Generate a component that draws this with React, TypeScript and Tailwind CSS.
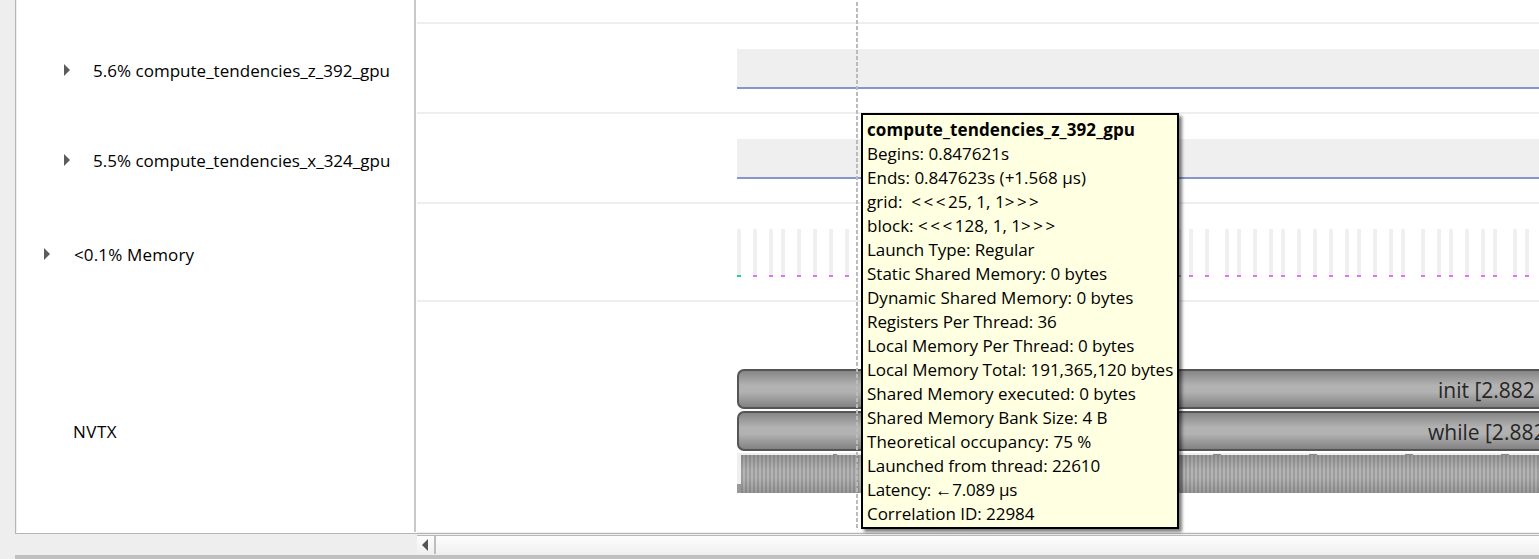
import type { ReactNode } from "react";

const ticksLeft = [737, 753, 769, 781, 797, 813, 829, 845];
const ticksRight = [1177, 1189, 1205, 1225, 1237, 1253, 1269, 1281, 1297, 1313, 1329, 1345, 1357, 1373, 1389, 1401, 1421, 1437, 1449, 1465, 1481, 1493, 1513, 1525];
const ticks = [...ticksLeft, ...ticksRight];
const notches = [833, 1213, 1309, 1405, 1501];

function Brackets({ children }: { children: string }) {
  return <span className="tracking-[2.5px]">{children}</span>;
}

const tooltipLines: { key: string; cls: string; body: ReactNode }[] = [
  { key: "begins", cls: "tracking-[0px]", body: "Begins: 0.847621s" },
  { key: "ends", cls: "tracking-[0.02px]", body: "Ends: 0.847623s (+1.568 µs)" },
  { key: "grid", cls: "tracking-[0.02px]", body: <>grid:  <Brackets>{"<<<"}</Brackets>25, 1, 1<Brackets>{">>>"}</Brackets></> },
  { key: "block", cls: "tracking-[0.02px]", body: <>block: <Brackets>{"<<<"}</Brackets>128, 1, 1<Brackets>{">>>"}</Brackets></> },
  { key: "launch", cls: "tracking-[-0.09px]", body: "Launch Type: Regular" },
  { key: "static", cls: "tracking-[0px]", body: "Static Shared Memory: 0 bytes" },
  { key: "dynamic", cls: "tracking-[0.02px]", body: "Dynamic Shared Memory: 0 bytes" },
  { key: "registers", cls: "tracking-[-0.11px]", body: "Registers Per Thread: 36" },
  { key: "local", cls: "tracking-[-0.05px]", body: "Local Memory Per Thread: 0 bytes" },
  { key: "total", cls: "tracking-[-0.04px]", body: "Local Memory Total: 191,365,120 bytes" },
  { key: "executed", cls: "tracking-[-0.02px]", body: "Shared Memory executed: 0 bytes" },
  { key: "bank", cls: "tracking-[0px]", body: "Shared Memory Bank Size: 4 B" },
  { key: "occupancy", cls: "tracking-[0.04px]", body: "Theoretical occupancy: 75 %" },
  { key: "thread", cls: "tracking-[-0.09px]", body: "Launched from thread: 22610" },
  { key: "latency", cls: "tracking-[-0.17px]", body: "Latency: ←7.089 µs" },
  { key: "correlation", cls: "tracking-[-0.03px]", body: "Correlation ID: 22984" },
];

function Arrow() {
  return (
    <svg className="block h-3 w-1.5 shrink-0" viewBox="0 0 6 12">
      <path d="M0 0L6 6L0 12Z" fill="#5c5c5c" />
    </svg>
  );
}

function Kernel() {
  return <div className="ml-[320px] h-10 border-b-2 border-[#8694cf] bg-[#efefef]" />;
}

function Range({ children, pad }: { children: ReactNode; pad: string }) {
  return (
    <div className="ml-[320px] h-10 overflow-hidden rounded-l-[7px] border-y-2 border-l-2 border-[#555] bg-[linear-gradient(#868686,#b2b2b2_40%,#b2b2b2_58%,#828282)]">
      <div className={"whitespace-pre text-[21px] leading-[38px] text-[#262626] " + pad}>{children}</div>
    </div>
  );
}

export default function App() {
  return (
    <div className="relative flex h-[559px] w-[1539px] flex-col overflow-hidden bg-[#eee] font-['Open_Sans','Noto_Sans',sans-serif] text-[17px] text-black">
      <div className="ml-[15px] flex h-[534px] shrink-0 border-b border-l border-[#b5b5b5] bg-white">
        <div className="mb-px flex w-[400px] shrink-0 flex-col border-l border-r-2 border-l-[#eee] border-r-[#c8c8c8] whitespace-pre">
          <div className="mt-[25px] flex h-[90px] shrink-0 items-center pl-[47px]">
            <Arrow />
            <span className="ml-[23px] pt-0.5 tracking-[0.02px]">5.6% compute_tendencies_z_392_gpu</span>
          </div>
          <div className="flex h-[90px] shrink-0 items-center pl-[47px]">
            <Arrow />
            <span className="ml-[23px] pt-0.5">5.5% compute_tendencies_x_324_gpu</span>
          </div>
          <div className="flex h-[98px] shrink-0 items-center pl-[27px]">
            <Arrow />
            <span className="ml-6 pt-0.5 tracking-[0.15px]">&lt;0.1% Memory</span>
          </div>
          <div className="mt-[30px] flex h-[198px] shrink-0 items-center pl-[56px]">
            <span className="tracking-[0.5px]">NVTX</span>
          </div>
        </div>
        <div className="ml-px flex min-w-0 flex-1 flex-col">
          <div className="h-6 border-b-2 border-[#eee]" />
          <div className="h-[90px] border-b-2 border-[#eee] pt-[25px]"><Kernel /></div>
          <div className="h-[90px] border-b-2 border-[#eee] pt-[25px]"><Kernel /></div>
          <div className="h-[98px] border-b-2 border-[#eee] pt-[25px]">
            <svg className="block h-12 w-full" viewBox="417 229 1122 48">
              {ticks.map((x) => (
                <g key={x}>
                  <rect x={x} y="229" width="4" height="46" fill="#f0f0f0" />
                  <rect x={x} y="275" width="4" height="2" fill={x === 737 ? "#1fd0a0" : "#dc74f8"} />
                </g>
              ))}
            </svg>
          </div>
          <div className="flex flex-col gap-0.5 pt-[67px]">
            <Range pad="pl-[699px]">init [2.882</Range>
            <Range pad="pl-[689px]">while [2.882</Range>
            <svg className="block h-10 w-full" viewBox="417 453 1122 40">
              <defs>
                <linearGradient id="band" x1="0" y1="0" x2="0" y2="1">
                  <stop offset="0" stopColor="#999" />
                  <stop offset="0.4" stopColor="#b4b4b4" />
                  <stop offset="0.6" stopColor="#b4b4b4" />
                  <stop offset="1" stopColor="#999" />
                </linearGradient>
                <pattern id="stripes" x="741" y="455" width="4" height="38" patternUnits="userSpaceOnUse">
                  <rect width="2" height="38" fill="#000" fillOpacity="0.13" />
                </pattern>
              </defs>
              <rect x="737" y="453" width="802" height="40" fill="#efefef" />
              <rect x="741" y="455" width="798" height="38" fill="url(#band)" />
              <rect x="741" y="455" width="798" height="38" fill="url(#stripes)" />
              <rect x="737" y="484" width="4" height="9" fill="#999" />
              {notches.map((x) => (
                <rect key={x} x={x} y="454" width={x === 833 ? 4 : 8} height="1" fill="#888" />
              ))}
            </svg>
          </div>
          <div className="mt-auto h-px bg-[#eee]" />
        </div>
      </div>

      <div className="ml-[417px] mt-px flex h-5 shrink-0 border-t border-[#b8b8b8] bg-[linear-gradient(#fdfdfd,#efefef)]">
        <div className="mb-px flex w-[19px] items-center border-r-2 border-[#bdbdbd] pl-[5px]">
          <svg className="block h-3 w-1.5" viewBox="0 0 6 12"><path d="M6 0L0 6L6 12Z" fill="#555" /></svg>
        </div>
      </div>
      <div className="ml-[15px] h-1 shrink-0 bg-[#c0c0c0]" />

      <svg className="absolute left-[856px] top-0 h-[528px] w-0.5" viewBox="0 0 2 528">
        <path d="M1 2V528" stroke="#bbb" strokeWidth="2" strokeDasharray="4 2" />
      </svg>

      <div className="absolute left-[861px] top-[113px] h-[416px] w-[318px] border-2 border-black bg-[#ffffe1] pl-1 pt-[3px] whitespace-pre shadow-[3px_3px_3px_rgba(0,0,0,0.5)]">
        <div className="h-6 leading-6 font-bold"><span className="tracking-[0.1px]">compute_tendencies_z_392_gpu</span></div>
        {tooltipLines.map((line) => (
          <div key={line.key} className="h-6 leading-6">
            <span className={line.cls}>{line.body}</span>
          </div>
        ))}
      </div>
    </div>
  );
}
